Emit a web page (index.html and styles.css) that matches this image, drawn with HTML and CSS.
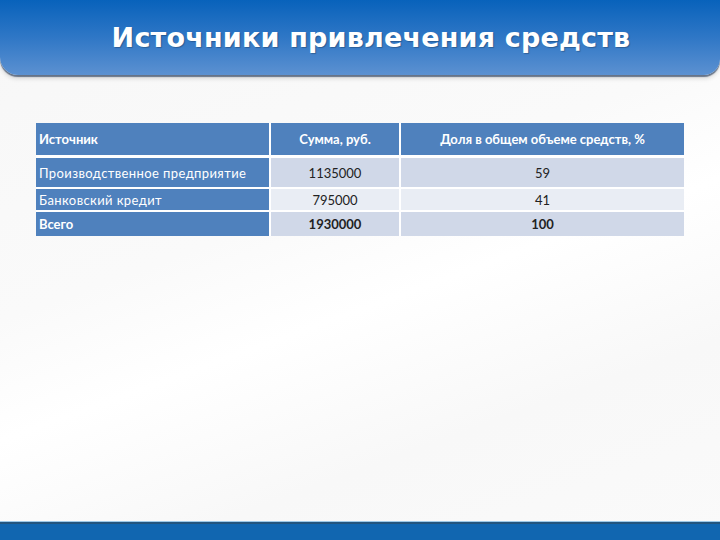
FILE: index.html
```html
<!DOCTYPE html>
<html lang="ru">
<head>
<meta charset="utf-8">
<link rel="stylesheet" href="styles.css">
</head>
<body>
<div class="slide">
  <header class="banner"><h1 class="title">Источники привлечения средств</h1></header>
  <main class="content">
    <table class="data">
      <thead>
        <tr><th class="c1">Источник</th><th class="c2">Сумма, руб.</th><th class="c3">Доля в общем объеме средств, %</th></tr>
      </thead>
      <tbody>
        <tr class="odd"><td class="c1">Производственное предприятие</td><td class="c2">1135000</td><td class="c3">59</td></tr>
        <tr class="even"><td class="c1">Банковский кредит</td><td class="c2">795000</td><td class="c3">41</td></tr>
        <tr class="odd total"><td class="c1">Всего</td><td class="c2">1930000</td><td class="c3">100</td></tr>
      </tbody>
    </table>
  </main>
  <footer class="bottom"></footer>
</div>
</body>
</html>
```
FILE: styles.css
```css
html, body { margin: 0; padding: 0; }
body { width: 720px; height: 540px; overflow: hidden; background: #fafafa; }
.slide {
  width: 720px; height: 540px;
  display: flex; flex-direction: column;
  background: linear-gradient(160deg, #f7f7f7 0%, #fafafa 40%, #ffffff 55%, #f8f8f8 75%, #fafafa 100%);
}
.banner {
  height: 75px;
  box-sizing: border-box;
  background: linear-gradient(to bottom, #0862bb 0%, #2f77c6 50%, #5c91d1 100%);
  border-radius: 0 0 16px 18px;
  box-shadow: 0 2px 1px rgba(40, 60, 90, 0.65), 0 4px 4px rgba(0,0,0,0.12);
  display: flex; justify-content: center; align-items: flex-start;
  padding: 22px 0 0 22px;
}
.title {
  margin: 0;
  font-family: "DejaVu Sans", sans-serif;
  font-weight: bold;
  font-size: 27px;
  line-height: 32px;
  color: #ffffff;
  letter-spacing: 0.2px;
  text-shadow: 1px 1px 1px rgba(0,0,0,0.25);
}
.content { flex: 1; padding: 48px 36px 0 36px; }
.data {
  border-collapse: collapse;
  width: 648px;
  font-family: "Lato", "Liberation Sans", sans-serif;
  font-size: 13px;
}
.data th, .data td { border: 2px solid #ffffff; padding: 0 4px; }
.data tr > :first-child { border-left: none; }
.data tr > :last-child { border-right: none; }
.data thead th { border-top: none; }
.data tbody tr:last-child td { border-bottom: none; }
.data th {
  background: #4f81bd; color: #ffffff; font-weight: bold;
  height: 32px; border-bottom-width: 3px;
}
.data .c1 { width: 226px; text-align: left; padding-left: 3px; }
.data .c2 { width: 120px; text-align: center; }
.data .c3 { text-align: center; }
.data td.c1 { background: #4f81bd; color: #ffffff; letter-spacing: 0.4px; }
.data tr.odd td { background-color: #d0d8e8; }
.data tr.even td { background-color: #e9edf4; }
.data tr td.c1 { background-color: #4f81bd; }
.data td { color: #222222; }
.data tbody tr:nth-child(1) td { height: 29px; }
.data tbody tr:nth-child(2) td { height: 21px; }
.data tbody tr:nth-child(3) td { height: 24px; }
.data tr.total td { font-weight: bold; letter-spacing: 0; }
.data tr.total td.c1 { color: #ffffff; }
.bottom {
  height: 16px;
  background: #1166b0;
  border-top: 2px solid #23557f;
  box-shadow: 0 -1px 0 #9cc8e8;
}
```
